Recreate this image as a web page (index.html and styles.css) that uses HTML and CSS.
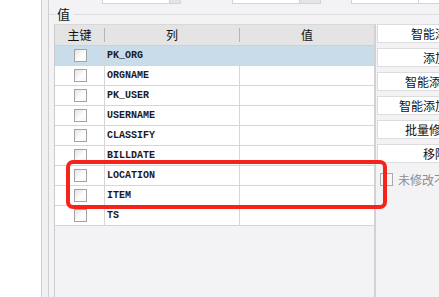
FILE: index.html
```html
<!DOCTYPE html>
<html>
<head>
<meta charset="utf-8">
<link rel="stylesheet" href="styles.css">
</head>
<body>
<div class="page">
  <div class="leftpane"></div>
  <div class="strip"></div>
  <div class="main">
    <div class="topbar">
      <div class="inp i1"></div><div class="drop d1"></div>
      <div class="inp i2"></div><div class="drop d2"></div>
      <div class="inp i3"></div><div class="inp i4"></div>
    </div>
    <div class="legend">
      <span class="lline short"></span>
      <span class="ltext">值</span>
      <span class="lline long"></span>
    </div>
    <div class="content">
      <div class="grid">
        <div class="hdr">
          <div class="hc c1">主键</div>
          <div class="hsep"></div>
          <div class="hc c2">列</div>
          <div class="hsep"></div>
          <div class="hc c3">值</div>
        </div>
        <div class="row sel"><div class="cell c1"><span class="cb"></span></div><div class="cell c2 code">PK_ORG</div><div class="cell c3"></div></div>
        <div class="row"><div class="cell c1"><span class="cb"></span></div><div class="cell c2 code">ORGNAME</div><div class="cell c3"></div></div>
        <div class="row"><div class="cell c1"><span class="cb"></span></div><div class="cell c2 code">PK_USER</div><div class="cell c3"></div></div>
        <div class="row"><div class="cell c1"><span class="cb"></span></div><div class="cell c2 code">USERNAME</div><div class="cell c3"></div></div>
        <div class="row"><div class="cell c1"><span class="cb"></span></div><div class="cell c2 code">CLASSIFY</div><div class="cell c3"></div></div>
        <div class="row"><div class="cell c1"><span class="cb"></span></div><div class="cell c2 code">BILLDATE</div><div class="cell c3"></div></div>
        <div class="row"><div class="cell c1"><span class="cb"></span></div><div class="cell c2 code">LOCATION</div><div class="cell c3"></div></div>
        <div class="row"><div class="cell c1"><span class="cb"></span></div><div class="cell c2 code">ITEM</div><div class="cell c3"></div></div>
        <div class="row"><div class="cell c1"><span class="cb"></span></div><div class="cell c2 code">TS</div><div class="cell c3"></div></div>
      </div>
      <div class="side">
        <div class="btn">智能添加</div>
        <div class="btn">添加</div>
        <div class="btn">智能添加列</div>
        <div class="btn">智能添加全部</div>
        <div class="btn">批量修改值</div>
        <div class="btn">移除</div>
        <div class="chk"><span class="cb2"></span><span class="chktext">未修改不保存</span></div>
      </div>
    </div>
  </div>
  <div class="highlight"></div>
</div>
</body>
</html>
```
FILE: styles.css
```css
html, body {
  margin: 0;
  padding: 0;
  overflow: hidden;
  width: 439px;
  height: 297px;
  background: #f3f3f5;
  font-family: "Noto Sans CJK SC", "Noto Sans", sans-serif;
  font-size: 12px;
  color: #111;
}
.page {
  position: relative;
  display: flex;
  width: 439px;
  height: 297px;
}
.leftpane {
  width: 41px;
  background: #fff;
  border-right: 1px solid #cfcfcf;
  flex: none;
}
.strip {
  width: 6px;
  background: #f1f1f3;
  border-right: 1px solid #cfcfcf;
  flex: none;
}
.main {
  flex: 1;
  min-width: 0;
  display: flex;
  flex-direction: column;
}
.topbar {
  height: 4px;
  display: flex;
  align-items: flex-end;
  overflow: hidden;
  flex: none;
}
.inp {
  height: 18px;
  background: #fff;
  border: 1px solid #d4d4d4;
  flex: none;
}
.drop {
  height: 18px;
  background: #e4e4e6;
  border: 1px solid #d4d4d4;
  border-left: none;
  flex: none;
}
.i1 { margin-left: 53px; width: 66px; }
.d1 { width: 10px; }
.i2 { margin-left: 51px; width: 66px; }
.d2 { width: 20px; }
.i3 { margin-left: 30px; width: 66px; }
.i4 { width: 30px; border-left: none; }
.legend {
  height: 20px;
  display: flex;
  align-items: center;
  flex: none;
}
.lline {
  height: 1px;
  background: #dedee0;
  margin-top: 1px;
}
.short { width: 7px; flex: none; }
.long { flex: 1; margin-left: 4px; }
.ltext {
  font-size: 13px;
  line-height: 20px;
  margin-left: 1px;
}
.content {
  flex: 1;
  display: flex;
  margin-left: 5px;
}
.grid {
  width: 319px;
  flex: none;
  border-left: 1px solid #cbcbcb;
  border-top: 1px solid #d8d8d8;
  border-right: 2px solid #d2d2d2;
}
.hdr {
  height: 20px;
  display: flex;
  align-items: center;
  background: #e4e4e4;
  border-bottom: 1px solid #d0d0d0;
}
.hc {
  text-align: center;
  line-height: 20px;
  font-size: 12px;
}
.hsep {
  width: 1px;
  height: 14px;
  background: #b4b4b4;
  flex: none;
}
.hdr .c1 { width: 49px; }
.hdr .c2 { width: 134px; }
.hdr .c3 { width: 134px; }
.row {
  display: flex;
  height: 19px;
  border-bottom: 1px solid #d6d6d6;
  background: #fff;
}
.row.sel { background: #c9dce9; }
.cell {
  height: 19px;
  display: flex;
  align-items: center;
}
.row .c1 {
  width: 49px;
  justify-content: center;
  border-right: 1px solid #d6d6d6;
}
.row .c2 {
  width: 132px;
  padding-left: 2px;
  border-right: 1px solid #d6d6d6;
}
.row .c3 { flex: 1; }
.code {
  font-family: "Liberation Mono", monospace;
  font-size: 10px;
  font-weight: bold;
  color: #1a1a2a;
  letter-spacing: 0;
}
.cb {
  width: 11px;
  height: 11px;
  border: 1px solid #a3a3a3;
  background: linear-gradient(135deg, #e4e4e4 0%, #ffffff 60%, #f6f6f6 100%);
  margin-left: 1px;
}
.side {
  flex: none;
  width: 116px;
  margin-left: 1px;
  display: flex;
  flex-direction: column;
}
.btn {
  height: 17px;
  line-height: 17px;
  border: 1px solid #dcdcdc;
  background: #fff;
  text-align: center;
  font-size: 12px;
  margin-bottom: 5px;
  white-space: nowrap;
}
.chk {
  display: flex;
  align-items: center;
  margin-top: 4px;
  margin-left: 3px;
  height: 14px;
}
.cb2 {
  width: 11px;
  height: 11px;
  border: 1px solid #aaaaaa;
  background: #f6f6f6;
  flex: none;
}
.chktext {
  margin-left: 5px;
  color: #8c8c8c;
  font-size: 12px;
  white-space: nowrap;
}
.highlight {
  position: absolute;
  left: 66px;
  top: 160px;
  width: 313px;
  height: 41px;
  border: 4px solid #f5231a;
  border-radius: 7px;
}
```
